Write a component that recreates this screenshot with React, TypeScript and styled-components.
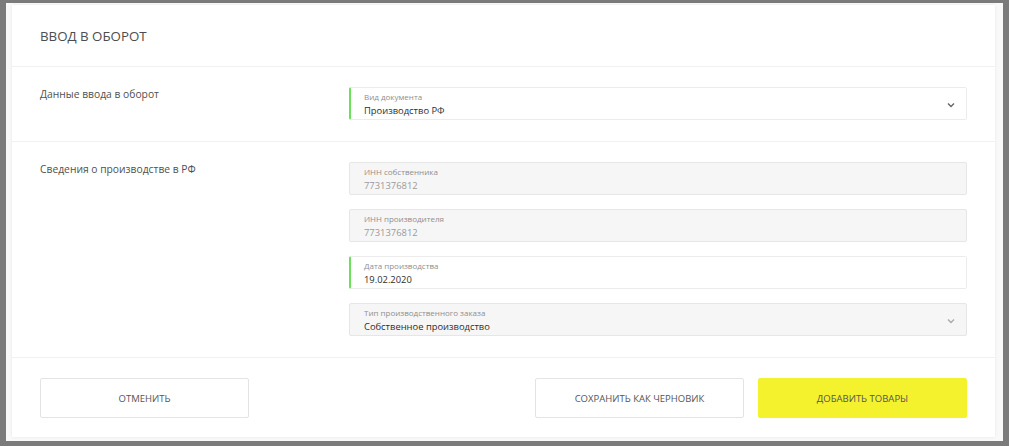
import styled, { createGlobalStyle } from "styled-components";

const Global = createGlobalStyle`
    html, body {
        margin:0;
        padding:0;
        background:#fff;
        font-family:"Open Sans", "Liberation Sans", sans-serif;
    }
    * { box-sizing:border-box; }
`;

const Frame = styled.div`
    width:1009px;
    height:446px;
    border-style:solid;
    border-color:#7b7b7b;
    border-width:3px 6px 5px 6px;
    background:#f9f9f9;
    padding:2px 8px 4px 6px;
`;

const Card = styled.div`
    background:#fff;
    height:100%;
    box-shadow:0 0 3px rgba(0,0,0,0.08);
    display:flex;
    flex-direction:column;
`;

const Header = styled.div`
    height:62px;
    flex-shrink:0;
    padding:0 28px;
    display:flex;
    align-items:center;
    border-bottom:1px solid #f1f1f1;

    h2{
        margin:0;
        font-size:13.3px;
        font-weight:400;
        color:#4d4d4d;
    }
`;

const Section = styled.div`
    flex-shrink:0;
    display:grid;
    grid-template-columns:309px 1fr;
    padding:20px 28px 21px 28px;
    border-bottom:1px solid #f1f1f1;
`;

const SectionLabel = styled.div`
    font-size:10.3px;
    color:#505050;
    padding-top:0;
`;

const Fields = styled.div`
    display:flex;
    flex-direction:column;
    gap:14px;
`;

const Field = styled.div<{ $disabled?: boolean; $accent?: boolean }>`
    position:relative;
    height:33px;
    border:1px solid ${p => p.$disabled ? "#e6e6e6" : "#ececec"};
    border-left:${p => p.$accent ? "2px solid #6be15a" : "1px solid #e6e6e6"};
    border-radius:2px;
    background:${p => p.$disabled ? "#f6f6f6" : "#fff"};
    padding:3px 30px 0 ${p => p.$accent ? "13px" : "14px"};
    display:flex;
    flex-direction:column;
`;

const FieldLabel = styled.span`
    font-size:8px;
    line-height:11px;
    color:#8f8f8f;
`;

const FieldValue = styled.span<{ $disabled?: boolean }>`
    font-size:9.4px;
    line-height:13px;
    margin-top:2px;
    color:${p => p.$disabled ? "#9a9a9a" : "#2e2e2e"};
`;

const Chevron = styled.svg`
    position:absolute;
    right:11px;
    top:14px;
    width:8px;
    height:6px;
`;

const Footer = styled.div`
    flex:1;
    display:flex;
    align-items:flex-start;
    padding:20px 28px;
`;

const Button = styled.button<{ $primary?: boolean }>`
    width:209px;
    height:40px;
    border:1px solid ${p => p.$primary ? "#f4f22c" : "#e4e4e4"};
    border-radius:2px;
    background:${p => p.$primary ? "#f4f22c" : "#fff"};
    font-family:inherit;
    font-size:9.5px;
    font-weight:500;
    color:#555;
    text-transform:uppercase;
    cursor:pointer;
`;

const Spacer = styled.div`
    flex:1;
`;

const ButtonGroup = styled.div`
    display:flex;
    gap:14px;
`;

const Arrow = ({ color = "#666" }: { color?: string }) => (
    <Chevron viewBox="0 0 8 6">
        <path d="M1 1.5 L4 4.5 L7 1.5" fill="none" stroke={color} strokeWidth="1.4" />
    </Chevron>
);

const App = () => {
    return (
        <>
            <Global />
            <Frame>
                <Card>
                    <Header>
                        <h2>ВВОД В ОБОРОТ</h2>
                    </Header>
                    <Section>
                        <SectionLabel>Данные ввода в оборот</SectionLabel>
                        <Fields>
                            <Field $accent>
                                <FieldLabel>Вид документа</FieldLabel>
                                <FieldValue>Производство РФ</FieldValue>
                                <Arrow />
                            </Field>
                        </Fields>
                    </Section>
                    <Section>
                        <SectionLabel>Сведения о производстве в РФ</SectionLabel>
                        <Fields>
                            <Field $disabled>
                                <FieldLabel>ИНН собственника</FieldLabel>
                                <FieldValue $disabled>7731376812</FieldValue>
                            </Field>
                            <Field $disabled>
                                <FieldLabel>ИНН производителя</FieldLabel>
                                <FieldValue $disabled>7731376812</FieldValue>
                            </Field>
                            <Field $accent>
                                <FieldLabel>Дата производства</FieldLabel>
                                <FieldValue>19.02.2020</FieldValue>
                            </Field>
                            <Field $disabled>
                                <FieldLabel>Тип производственного заказа</FieldLabel>
                                <FieldValue>Собственное производство</FieldValue>
                                <Arrow color="#aaa" />
                            </Field>
                        </Fields>
                    </Section>
                    <Footer>
                        <Button>Отменить</Button>
                        <Spacer />
                        <ButtonGroup>
                            <Button>Сохранить как черновик</Button>
                            <Button $primary>Добавить товары</Button>
                        </ButtonGroup>
                    </Footer>
                </Card>
            </Frame>
        </>
    );
};

export default App;
